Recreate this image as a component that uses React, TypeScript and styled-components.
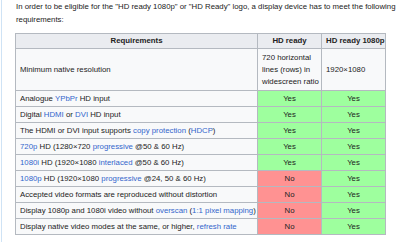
import React from "react";
import styled, { createGlobalStyle } from "styled-components";

const Global = createGlobalStyle`
  html, body { margin: 0; padding: 0; background: #ffffff; }
  body { font-family: "Liberation Sans", Arial, sans-serif; color: #202122; }
`;

const Page = styled.div`
  margin-left: 1px;
  border-left: 1px solid #cfe3f5;
  padding: 1px 0 7px 13px;
  min-height: 242px;
  box-sizing: border-box;
  background: #ffffff;
`;

const Intro = styled.p`
  margin: 0 0 7px 0;
  padding-left: 1px;
  font-size: 7.8px;
  line-height: 12.5px;
  white-space: nowrap;
  color: #222;
`;

const Table = styled.table`
  border-collapse: collapse;
  table-layout: fixed;
  width: 371px;
  font-size: 7.8px;
  line-height: 12px;
  color: #222;
  background: #f8f9fa;
  border: 1px solid #b4b9c0;
`;

const Th = styled.th`
  background: #eaecf0;
  border: 1px solid #b4b9c0;
  padding: 1px 4px;
  font-weight: bold;
  text-align: center;
  white-space: nowrap;
`;

const Td = styled.td<{ $tone?: "yes" | "no"; $tall?: boolean }>`
  border: 1px solid #b4b9c0;
  padding: ${(p) => (p.$tall ? "2.5px 4px" : "1.5px 4px")};
  vertical-align: middle;
  white-space: nowrap;
  overflow: hidden;
  text-align: ${(p) => (p.$tone ? "center" : "left")};
  background: ${(p) =>
    p.$tone === "yes" ? "#9eff9e" : p.$tone === "no" ? "#ff9292" : "#f8f9fa"};
`;

const Link = styled.a`
  color: #3366cc;
  text-decoration: none;
`;

type Row = { label: React.ReactNode; hd: "yes" | "no"; full: "yes" | "no" };

const rows: Row[] = [
  { label: <>Analogue <Link>YPbPr</Link> HD input</>, hd: "yes", full: "yes" },
  { label: <>Digital <Link>HDMI</Link> or <Link>DVI</Link> HD input</>, hd: "yes", full: "yes" },
  {
    label: <>The HDMI or DVI input supports <Link>copy protection</Link> (<Link>HDCP</Link>)</>,
    hd: "yes",
    full: "yes",
  },
  {
    label: <><Link>720p</Link> HD (1280×720 <Link>progressive</Link> @50 &amp; 60 Hz)</>,
    hd: "yes",
    full: "yes",
  },
  {
    label: <><Link>1080i</Link> HD (1920×1080 <Link>interlaced</Link> @50 &amp; 60 Hz)</>,
    hd: "yes",
    full: "yes",
  },
  {
    label: <><Link>1080p</Link> HD (1920×1080 <Link>progressive</Link> @24, 50 &amp; 60 Hz)</>,
    hd: "no",
    full: "yes",
  },
  { label: <>Accepted video formats are reproduced without distortion</>, hd: "no", full: "yes" },
  {
    label: <>Display 1080p and 1080i video without <Link>overscan</Link> (<Link>1:1 pixel mapping</Link>)</>,
    hd: "no",
    full: "yes",
  },
  {
    label: <>Display native video modes at the same, or higher, <Link>refresh rate</Link></>,
    hd: "no",
    full: "yes",
  },
];

const word = (t: "yes" | "no") => (t === "yes" ? "Yes" : "No");

export default function App() {
  return (
    <>
      <Global />
      <Page>
        <Intro>
          In order to be eligible for the "HD ready 1080p" or "HD Ready" logo, a display device has to meet the following
          <br />
          requirements:
        </Intro>
        <Table>
          <colgroup>
            <col style={{ width: 242 }} />
            <col style={{ width: 64 }} />
            <col style={{ width: 64 }} />
          </colgroup>
          <thead>
            <tr>
              <Th>Requirements</Th>
              <Th>HD ready</Th>
              <Th>HD ready 1080p</Th>
            </tr>
          </thead>
          <tbody>
            <tr>
              <Td $tall>Minimum native resolution</Td>
              <Td $tall>
                720 horizontal
                <br />
                lines (rows) in
                <br />
                widescreen ratio
              </Td>
              <Td $tall>1920×1080</Td>
            </tr>
            {rows.map((r, i) => (
              <tr key={i}>
                <Td>{r.label}</Td>
                <Td $tone={r.hd}>{word(r.hd)}</Td>
                <Td $tone={r.full}>{word(r.full)}</Td>
              </tr>
            ))}
          </tbody>
        </Table>
      </Page>
    </>
  );
}
